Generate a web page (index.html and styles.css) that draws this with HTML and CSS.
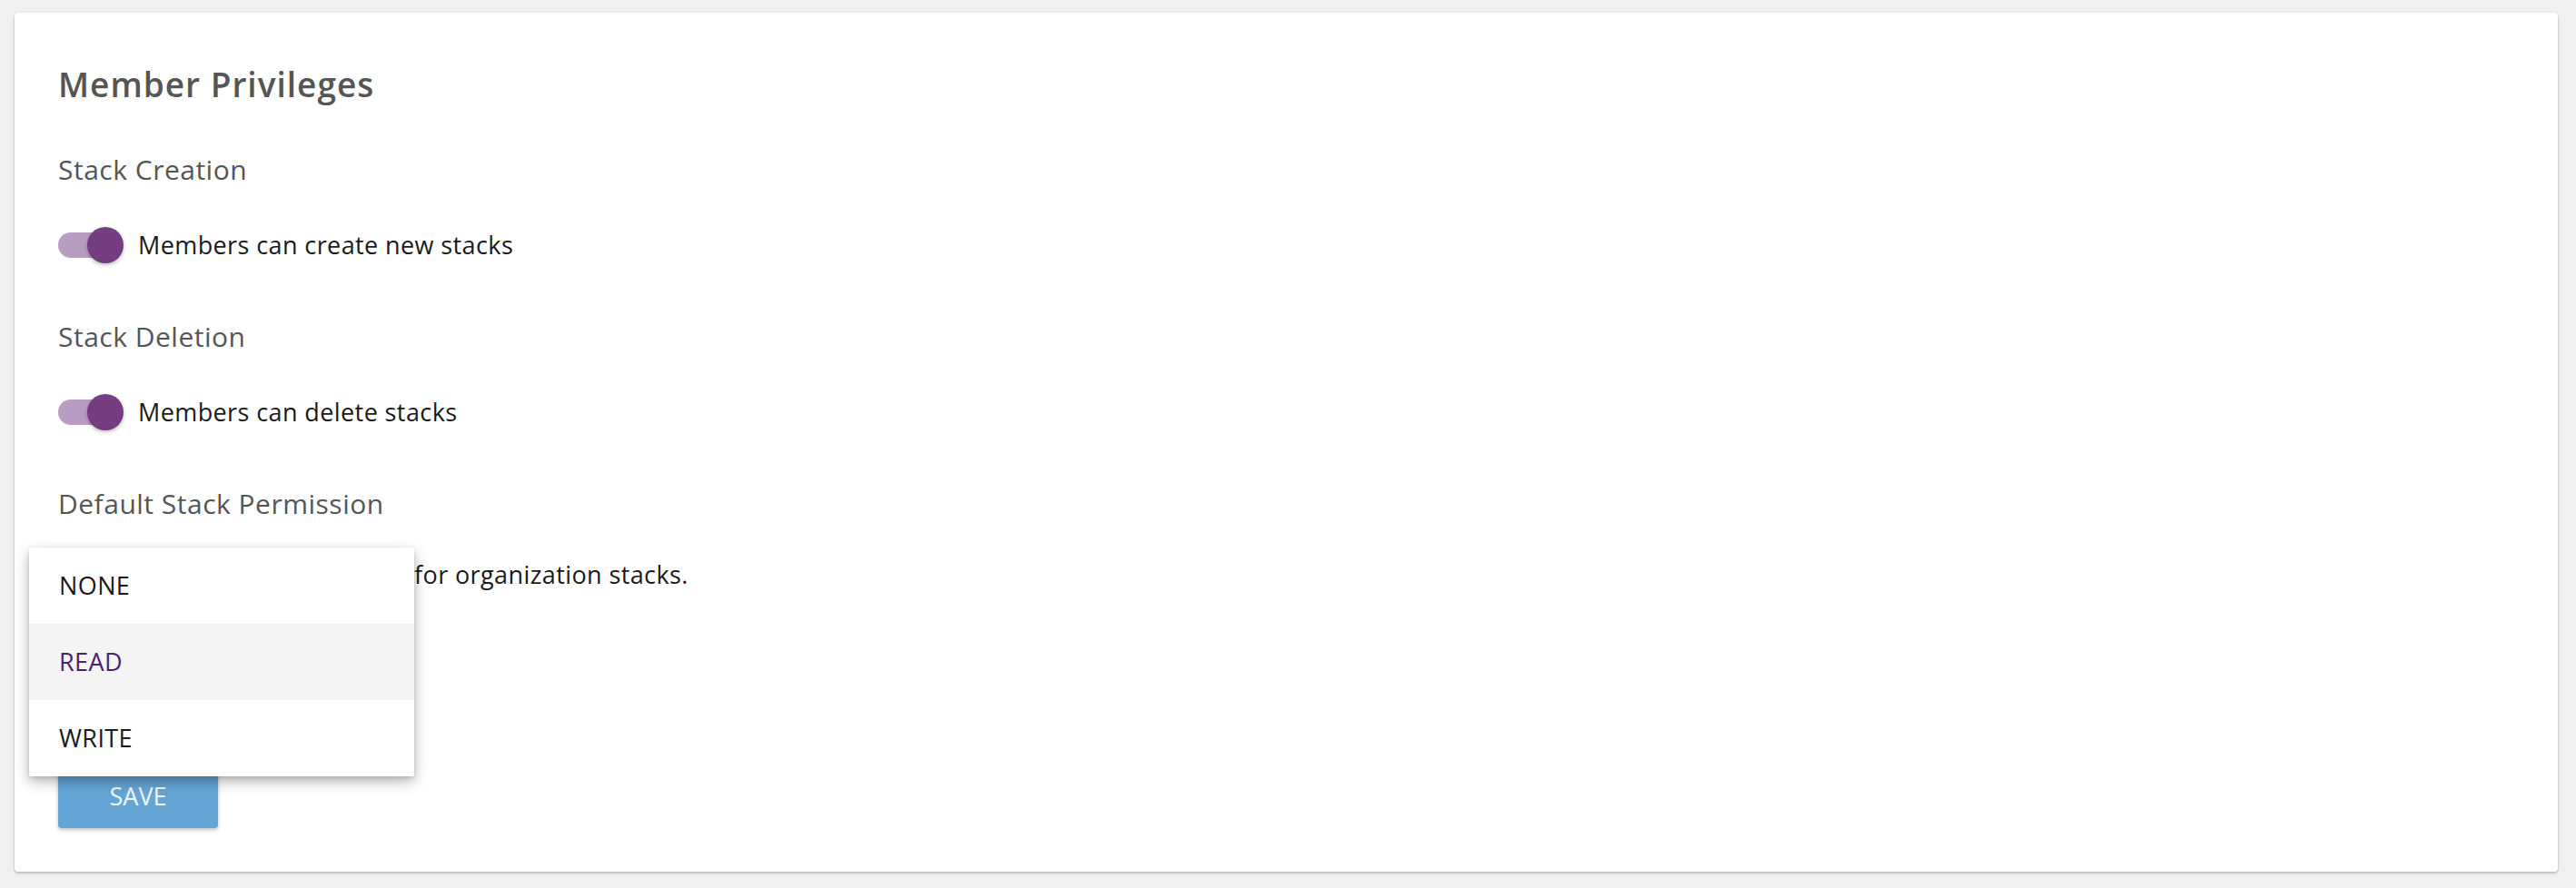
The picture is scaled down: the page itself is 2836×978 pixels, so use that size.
FILE: index.html
```html
<!DOCTYPE html>
<html lang="en">
<head>
<meta charset="utf-8">
<title>Member Privileges</title>
<link rel="stylesheet" href="styles.css">
</head>
<body>
<div class="page">
  <section class="card">
    <h2 class="card-title">Member Privileges</h2>

    <div class="section">
      <h3 class="section-title">Stack Creation</h3>
      <label class="toggle-row">
        <span class="toggle"><span class="track"></span><span class="thumb"></span></span>
        <span class="toggle-label">Members can create new stacks</span>
      </label>
    </div>

    <div class="section">
      <h3 class="section-title">Stack Deletion</h3>
      <label class="toggle-row">
        <span class="toggle"><span class="track"></span><span class="thumb"></span></span>
        <span class="toggle-label">Members can delete stacks</span>
      </label>
    </div>

    <div class="section section-perm">
      <h3 class="section-title">Default Stack Permission</h3>
      <div class="perm-row">
        <span class="perm-anchor" aria-hidden="true"></span>
        <span class="perm-text">for organization stacks.</span>
        <ul class="menu">
          <li class="menu-item">NONE</li>
          <li class="menu-item is-active">READ</li>
          <li class="menu-item">WRITE</li>
        </ul>
      </div>
    </div>

    <button class="btn-save" type="button">SAVE</button>
  </section>
</div>
</body>
</html>
```

FILE: styles.css
```css
html, body {
  margin: 0;
  padding: 0;
}
body {
  background: #f0f0f0;
  font-family: "Open Sans", "Noto Sans", "DejaVu Sans", sans-serif;
  color: #222;
}
.page {
  padding: 14px 20px 18px 16px;
}
.card {
  position: relative;
  background: #fff;
  border-radius: 4px;
  box-shadow: 0 1px 3px rgba(0,0,0,0.18), 0 2px 3px rgba(0,0,0,0.12);
  padding: 55px 48px 48px 48px;
  height: 946px;
  box-sizing: border-box;
}
.card-title {
  margin: 0;
  font-size: 37px;
  line-height: 48px;
  font-weight: 600;
  letter-spacing: 1px;
  color: #555;
}
.section {
  margin-top: 50px;
}
.section + .section {
  margin-top: 61px;
}
.section-title {
  margin: 0;
  font-size: 30px;
  line-height: 40px;
  font-weight: 400;
  letter-spacing: 0.5px;
  color: #555;
}
.toggle-row {
  margin-top: 43px;
  display: flex;
  align-items: center;
  height: 40px;
}
.toggle {
  display: grid;
  width: 72px;
  height: 40px;
  align-items: center;
}
.track {
  grid-area: 1 / 1;
  justify-self: start;
  width: 66px;
  height: 28px;
  border-radius: 14px;
  background: #b99cc2;
}
.thumb {
  grid-area: 1 / 1;
  justify-self: end;
  width: 40px;
  height: 40px;
  border-radius: 50%;
  background: #733d80;
  box-shadow: 0 2px 4px rgba(0,0,0,0.25);
}
.toggle-label {
  margin-left: 16px;
  font-size: 27px;
  line-height: 36px;
  letter-spacing: 0.4px;
  color: #1a1a1a;
}
.perm-row {
  position: relative;
  margin-top: 38px;
  display: flex;
  align-items: center;
  height: 40px;
  font-size: 27px;
  line-height: 40px;
  letter-spacing: 0.4px;
  color: #1a1a1a;
}
.perm-anchor {
  width: 392px;
  height: 40px;
  flex: none;
}
.menu {
  position: absolute;
  left: -32px;
  top: -10px;
  width: 424px;
  margin: 0;
  padding: 0;
  list-style: none;
  background: #fff;
  border-radius: 2px;
  box-shadow: 0 6px 16px rgba(0,0,0,0.28), 0 2px 5px rgba(0,0,0,0.12);
  z-index: 5;
}
.menu-item {
  height: 84px;
  padding-left: 33px;
  display: flex;
  align-items: center;
  font-size: 27px;
  letter-spacing: 0.4px;
  color: #1a1a1a;
}
.menu-item.is-active {
  background: #f4f4f4;
  color: #4a2170;
}
.btn-save {
  margin-top: 187px;
  display: flex;
  align-items: center;
  justify-content: center;
  width: 176px;
  height: 72px;
  border: none;
  border-radius: 4px;
  background: #65a5d6;
  color: #f2f5f8;
  font-family: inherit;
  font-size: 27px;
  box-shadow: 0 2px 4px rgba(0,0,0,0.25);
  padding: 0;
}
```
